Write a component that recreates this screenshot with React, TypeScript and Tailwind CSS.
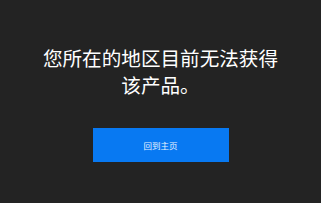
export default function App() {
  return (
    <main
      className="flex h-[203px] w-full flex-col items-center bg-[#232323] pt-[44px] text-white"
      style={{ fontFamily: '"Noto Sans CJK SC", "Noto Sans", sans-serif' }}
    >
      <h1 className="w-[240px] text-center text-[19.6px] leading-[27px] font-normal text-white">
        您所在的地区目前无法获得该产品。
      </h1>
      <button className="mt-[30px] flex h-[34px] w-[136px] items-center justify-center bg-[#0879f2] text-[8.5px] text-[#eaf3ff]">
        回到主页
      </button>
    </main>
  );
}
